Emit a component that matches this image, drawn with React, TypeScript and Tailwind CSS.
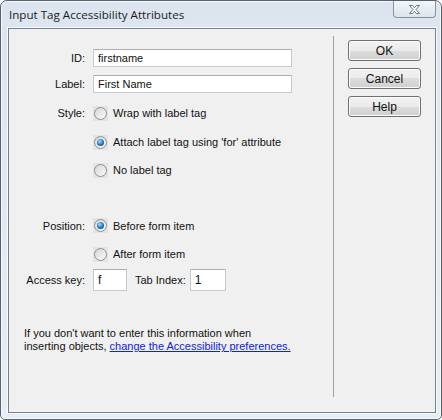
import type { ReactNode } from "react";

function Radio({ checked, children }: { checked?: boolean; children: ReactNode }) {
  return (
    <div className="flex items-center h-[15px]">
      <span className="w-[15px] h-[15px] bg-[#e4e4e4] flex items-center justify-center shrink-0">
        <span className="w-[13px] h-[13px] rounded-full border border-[#8d9092] bg-gradient-to-br from-[#d6d6d6] to-[#fbfbfb] flex items-center justify-center">
          {checked && (
            <span className="w-[7px] h-[7px] rounded-full bg-[radial-gradient(circle_at_40%_35%,#a8dcff,#1b74bf_55%,#0c3d74)]" />
          )}
        </span>
      </span>
      <span className="ml-[5px]">{children}</span>
    </div>
  );
}

function TextBox({ value, className }: { value: string; className: string }) {
  return (
    <div
      className={`bg-white border border-[#c4cad3] border-t-[#abadb3] pl-[4px] flex items-center ${className}`}
    >
      {value}
    </div>
  );
}

function Button({ children }: { children: ReactNode }) {
  return (
    <div className="w-[73px] h-[21px] rounded-[3px] border border-[#707070] shadow-[inset_0_0_0_1px_#fcfcfc] bg-[linear-gradient(#f2f2f2_0%,#ebebeb_50%,#dddddd_50%,#cfcfcf_100%)] flex items-center justify-center text-[12px]">
      {children}
    </div>
  );
}

function Row({ label, children }: { label?: string; children: ReactNode }) {
  return (
    <div className="flex items-center">
      <span className="w-[76px] text-right">{label}</span>
      <div className="ml-[8px] flex items-center">{children}</div>
    </div>
  );
}

export default function App() {
  return (
    <div className="w-[442px] h-[420px] bg-white font-['Liberation_Sans',Arial,sans-serif] text-[11px] text-[#111]">
      <div className="w-[442px] h-[420px] rounded-t-[7px] rounded-b-[5px] border border-[#58626e] bg-gradient-to-b from-[#dce5ef] to-[#e6edf5] shadow-[inset_0_0_0_1px_#f6f9fc] flex flex-col">
        {/* title bar */}
        <div className="h-[27px] flex items-start">
          <span className="pl-[8px] pt-[6px] text-[11.6px] text-[#1b1b1b] font-['Open_Sans',sans-serif] leading-[15px]">
            Input Tag Accessibility Attributes
          </span>
          <div className="ml-auto mr-[5px] w-[43px] h-[17px] rounded-b-[4px] border-x border-b border-[#8a939d] bg-gradient-to-b from-[#f4f7fa] to-[#dce4ed] flex items-center justify-center">
            <svg width="13" height="11" viewBox="0 0 13 11">
              <path
                d="M1.5 1.5h3l2 2.2 2-2.2h3l-3.5 4 3.5 4h-3l-2-2.2-2 2.2h-3l3.5-4z"
                fill="#fbfcfd"
                stroke="#6b7580"
                strokeWidth="1"
                strokeLinejoin="round"
              />
            </svg>
          </div>
        </div>

        {/* client area */}
        <div className="ml-[7px] mr-[5px] mb-[6px] flex-1 border border-[#74818f] shadow-[0_0_0_1px_#f8fafc] bg-[#f0f0f0] flex">
          <div className="w-[324px] flex flex-col pt-[20px]">
            <Row label="ID:">
              <TextBox value="firstname" className="w-[199px] h-[18px]" />
            </Row>
            <div className="mt-[8px]">
              <Row label="Label:">
                <TextBox value="First Name" className="w-[199px] h-[18px]" />
              </Row>
            </div>
            <div className="mt-[12px] flex flex-col gap-[13px]">
              <Row label="Style:">
                <Radio>Wrap with label tag</Radio>
              </Row>
              <Row>
                <Radio checked>Attach label tag using 'for' attribute</Radio>
              </Row>
              <Row>
                <Radio>No label tag</Radio>
              </Row>
            </div>
            <div className="mt-[40px] flex flex-col gap-[13px]">
              <Row label="Position:">
                <Radio checked>Before form item</Radio>
              </Row>
              <Row>
                <Radio>After form item</Radio>
              </Row>
            </div>
            <div className="mt-[7px]">
              <Row label="Access key:">
                <TextBox value="f" className="w-[34px] h-[22px] text-[12px]" />
                <span className="ml-[8px]">Tab Index:</span>
                <TextBox value="1" className="ml-[4px] w-[36px] h-[22px] text-[12px]" />
              </Row>
            </div>
            <p className="mt-[36px] pl-[15px] leading-[13px]">
              If you don't want to enter this information when
              <br />
              inserting objects,{" "}
              <span className="text-[#0c24d8] underline">change the Accessibility preferences.</span>
            </p>
          </div>
          <div className="w-px bg-[#a0a0a0] mt-[7px] mb-[15px]" />
          <div className="pl-[14px] pt-[11px] flex flex-col gap-[7px]">
            <Button>OK</Button>
            <Button>Cancel</Button>
            <Button>Help</Button>
          </div>
        </div>
      </div>
    </div>
  );
}
